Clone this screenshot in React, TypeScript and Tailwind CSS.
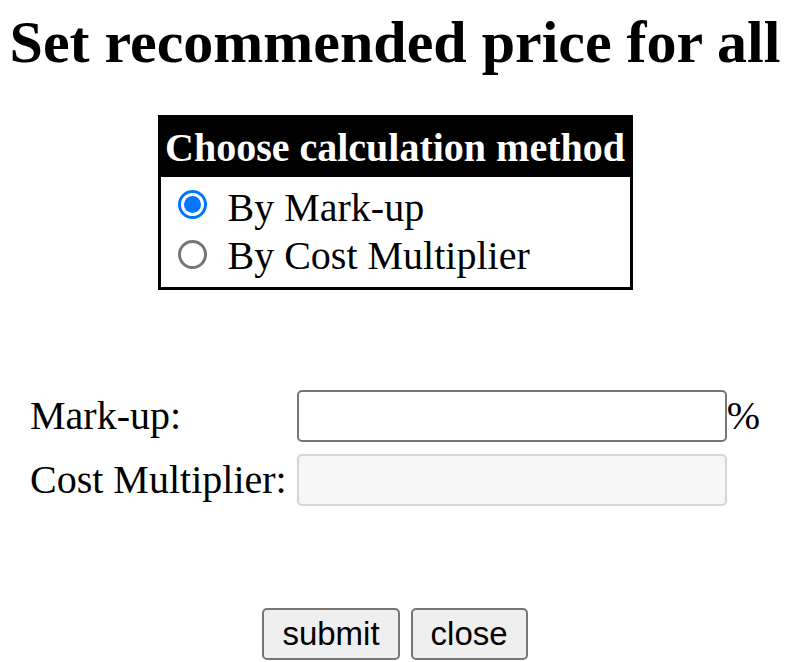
import { useState } from "react"

function Radio({ checked }: { checked: boolean }) {
  if (checked) {
    return (
      <span className="flex h-[29px] w-[29px] shrink-0 items-center justify-center rounded-full border-[3px] border-[#0075ff] bg-white">
        <span className="block h-[17px] w-[17px] rounded-full bg-[#0075ff]" />
      </span>
    )
  }
  return <span className="block h-[29px] w-[29px] shrink-0 rounded-full border-[3px] border-[#767676] bg-white" />
}

export default function App() {
  const [method, setMethod] = useState<"markup" | "multiplier">("markup")

  return (
    <div className="flex min-h-[662px] w-[790px] flex-col items-center bg-white pt-[8px] text-black font-['Liberation_Serif',serif]">
      <h2 className="text-[60px] font-bold leading-[69px] whitespace-nowrap">Set recommended price for all</h2>

      <div className="mt-[38px] w-[475px] border-[3px] border-black">
        <div className="flex h-[59px] items-center justify-center bg-black text-[40px] font-bold leading-[46px] text-white whitespace-nowrap">
          Choose calculation method
        </div>
        <div className="pt-[8px] pb-[6px] pl-[17px] text-[40px] leading-[46px]">
          <label className="flex h-[48px] items-start" onClick={() => setMethod("markup")}>
            <span className="mt-[5px] block">
              <Radio checked={method === "markup"} />
            </span>
            <span className="ml-[21px] whitespace-nowrap">By Mark-up</span>
          </label>
          <label className="flex h-[48px] items-start" onClick={() => setMethod("multiplier")}>
            <span className="mt-[7px] block">
              <Radio checked={method === "multiplier"} />
            </span>
            <span className="ml-[21px] whitespace-nowrap">By Cost Multiplier</span>
          </label>
        </div>
      </div>

      <div className="mt-[100px] flex w-[730px] flex-col gap-[12px] text-[40px] leading-[46px]">
        <div className="flex h-[52px] items-center">
          <span className="w-[267px] whitespace-nowrap">Mark-up:</span>
          <input
            type="text"
            disabled={method !== "markup"}
            className="h-[52px] w-[430px] rounded-[5px] border-2 border-[#767676] bg-white px-2 text-[33px] outline-none disabled:border-[#d5d5d5] disabled:bg-[#f7f7f7]"
          />
          <span>%</span>
        </div>
        <div className="flex h-[52px] items-center">
          <span className="w-[267px] whitespace-nowrap">Cost Multiplier:</span>
          <input
            type="text"
            disabled={method !== "multiplier"}
            className="h-[52px] w-[430px] rounded-[5px] border-2 border-[#767676] bg-white px-2 text-[33px] outline-none disabled:border-[#d5d5d5] disabled:bg-[#f7f7f7]"
          />
        </div>
      </div>

      <div className="mt-[102px] flex gap-[11px] font-['Liberation_Sans',Arial,sans-serif] text-[33px]">
        <button className="h-[52px] rounded-[5px] border-2 border-[#767676] bg-[#efefef] px-[18px] leading-[38px]">submit</button>
        <button className="h-[52px] rounded-[5px] border-2 border-[#767676] bg-[#efefef] px-[18px] leading-[38px]">close</button>
      </div>
    </div>
  )
}
